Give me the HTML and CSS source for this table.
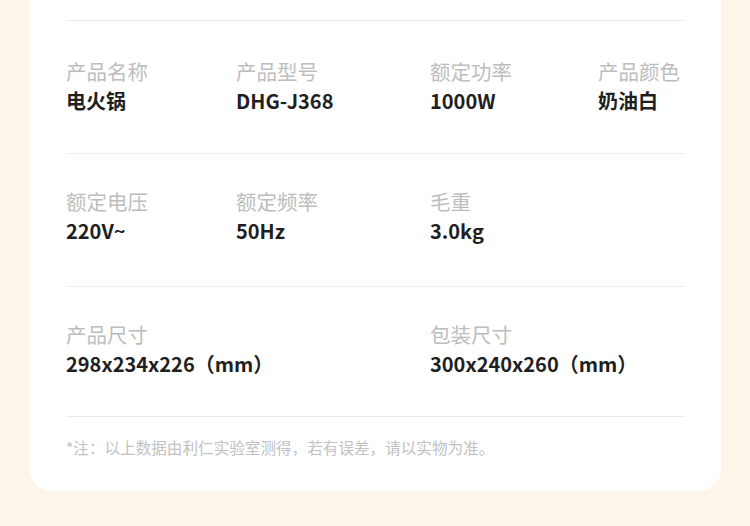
FILE: index.html
```html
<!DOCTYPE html>
<html lang="zh-CN">

<head>
    <meta charset="utf-8">
    <title>产品参数</title>
    <link rel="stylesheet" href="styles.css">
</head>

<body>
    <div class="card">
        <div class="spec-row">
            <div class="spec">
                <div class="label">产品名称</div>
                <div class="value">电火锅</div>
            </div>
            <div class="spec">
                <div class="label">产品型号</div>
                <div class="value">DHG-J368</div>
            </div>
            <div class="spec">
                <div class="label">额定功率</div>
                <div class="value">1000W</div>
            </div>
            <div class="spec">
                <div class="label">产品颜色</div>
                <div class="value">奶油白</div>
            </div>
        </div>

        <div class="spec-row">
            <div class="spec">
                <div class="label">额定电压</div>
                <div class="value">220V~</div>
            </div>
            <div class="spec">
                <div class="label">额定频率</div>
                <div class="value">50Hz</div>
            </div>
            <div class="spec">
                <div class="label">毛重</div>
                <div class="value">3.0kg</div>
            </div>
        </div>

        <div class="spec-row last">
            <div class="spec wide">
                <div class="label">产品尺寸</div>
                <div class="value">298x234x226（mm）</div>
            </div>
            <div class="spec wide">
                <div class="label">包装尺寸</div>
                <div class="value">300x240x260（mm）</div>
            </div>
        </div>

        <p class="note">*注：以上数据由利仁实验室测得，若有误差，请以实物为准。</p>
    </div>
</body>

</html>
```

FILE: styles.css
```css
:root {
    --bg-color: #fcf5e9;
    --label-color: #bdbdbd;
    --value-color: #1f1f1f;
    --line-color: #ededed;
}

body {
    font-family: 'Noto Sans CJK SC', 'Noto Sans', sans-serif;
    margin: 0;
    padding: 0;
    background-color: var(--bg-color);
}

.card {
    width: 692px;
    margin-left: 29px;
    padding: 20px 36px 33px 37px;
    box-sizing: border-box;
    background-color: #fff;
    border-radius: 0 0 22px 22px;
}

.spec-row {
    display: grid;
    grid-template-columns: 170px 194px 168px auto;
    border-top: 1px solid var(--line-color);
    padding: 36px 0 38px;
}

.spec-row + .spec-row {
    padding: 33px 0 41px;
}

.spec-row.last {
    padding-bottom: 38px;
}

.spec-row .wide {
    grid-column: span 2;
}

.label {
    font-size: 20.5px;
    line-height: 28px;
    color: var(--label-color);
}

.value {
    font-size: 20px;
    line-height: 28px;
    font-weight: 700;
    color: var(--value-color);
    margin-top: 2px;
}

.note {
    margin: 0;
    border-top: 1px solid var(--line-color);
    padding-top: 20px;
    font-size: 15.6px;
    line-height: 21px;
    color: #c2c2c2;
}
```
